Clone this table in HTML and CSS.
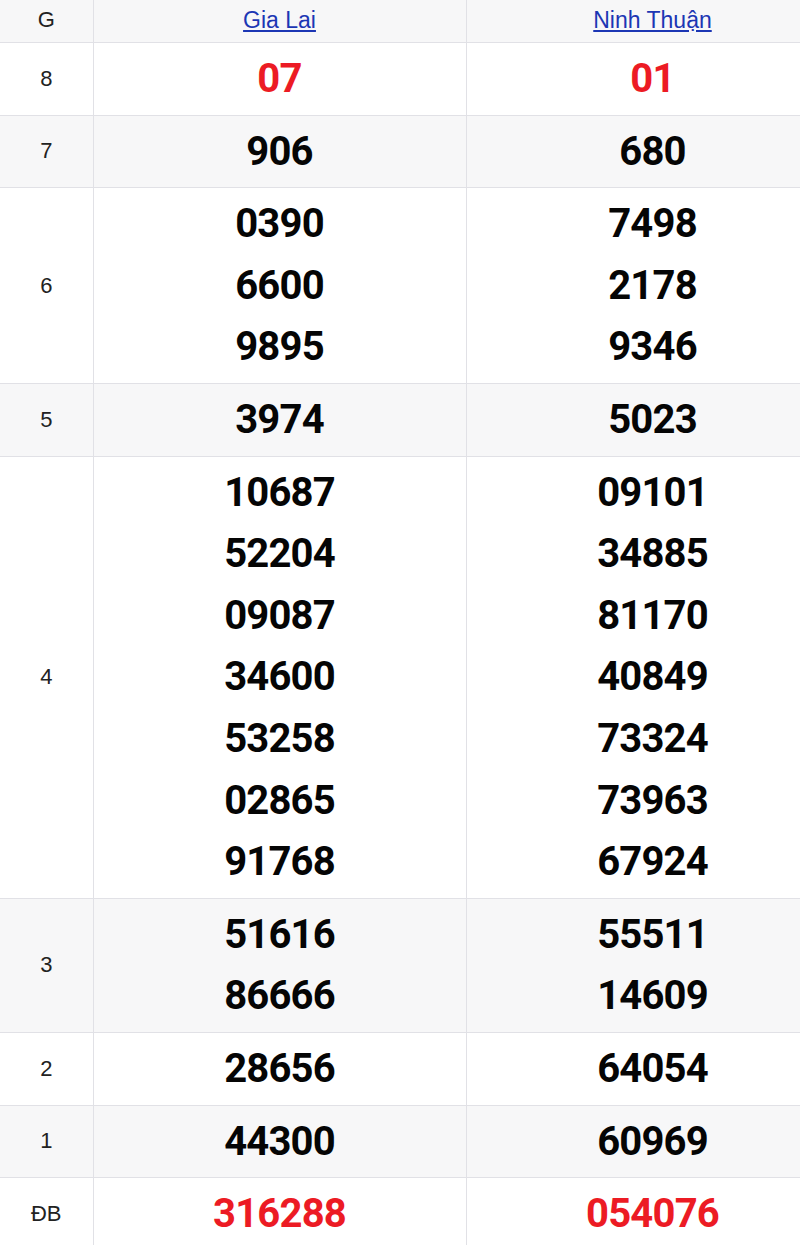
FILE: index.html
```html
<!DOCTYPE html>
<html lang="vi">
<head>
<meta charset="utf-8">
<title>Kết quả xổ số</title>
<link rel="stylesheet" href="styles.css">
</head>
<body>
<div class="wrap">
<table class="kq">
  <colgroup><col class="c-g"><col class="c-p"><col class="c-p"></colgroup>
  <thead>
    <tr class="alt">
      <th class="lbl">G</th>
      <th><a href="#">Gia Lai</a></th>
      <th><a href="#">Ninh Thuận</a></th>
    </tr>
  </thead>
  <tbody>
    <tr>
      <td class="lbl">8</td>
      <td class="num red"><div>07</div></td>
      <td class="num red"><div>01</div></td>
    </tr>
    <tr class="alt">
      <td class="lbl">7</td>
      <td class="num"><div>906</div></td>
      <td class="num"><div>680</div></td>
    </tr>
    <tr>
      <td class="lbl">6</td>
      <td class="num"><div>0390</div><div>6600</div><div>9895</div></td>
      <td class="num"><div>7498</div><div>2178</div><div>9346</div></td>
    </tr>
    <tr class="alt">
      <td class="lbl">5</td>
      <td class="num"><div>3974</div></td>
      <td class="num"><div>5023</div></td>
    </tr>
    <tr>
      <td class="lbl">4</td>
      <td class="num"><div>10687</div><div>52204</div><div>09087</div><div>34600</div><div>53258</div><div>02865</div><div>91768</div></td>
      <td class="num"><div>09101</div><div>34885</div><div>81170</div><div>40849</div><div>73324</div><div>73963</div><div>67924</div></td>
    </tr>
    <tr class="alt">
      <td class="lbl">3</td>
      <td class="num"><div>51616</div><div>86666</div></td>
      <td class="num"><div>55511</div><div>14609</div></td>
    </tr>
    <tr>
      <td class="lbl">2</td>
      <td class="num"><div>28656</div></td>
      <td class="num"><div>64054</div></td>
    </tr>
    <tr class="alt">
      <td class="lbl">1</td>
      <td class="num"><div>44300</div></td>
      <td class="num"><div>60969</div></td>
    </tr>
    <tr>
      <td class="lbl">ĐB</td>
      <td class="num red"><div>316288</div></td>
      <td class="num red"><div>054076</div></td>
    </tr>
  </tbody>
</table>
</div>
</body>
</html>
```

FILE: styles.css
```css
html, body {
  margin: 0;
  padding: 0;
  background: #ffffff;
}

.wrap {
  width: 800px;
  overflow: hidden;
}

.kq {
  width: 839px;
  border-collapse: collapse;
  table-layout: fixed;
  font-family: "Liberation Sans", Arial, sans-serif;
  color: #222;
}

.c-g { width: 93px; }
.c-p { width: 373px; }

.kq th,
.kq td {
  border-right: 1px solid #e1e1e6;
  border-bottom: 1px solid #e1e1e6;
  text-align: center;
  vertical-align: middle;
  padding: 0;
}

.kq th {
  font-weight: normal;
  font-size: 23px;
  line-height: 32px;
  padding: 4px 0 6px;
}

.kq th a {
  color: #1c36b4;
  text-decoration: underline;
  text-underline-offset: 2px;
}

.kq th.lbl {
  font-size: 22px;
}

.lbl {
  font-size: 22px;
  color: #222;
}

.alt {
  background: #f7f7f8;
}

.num {
  padding: 5px 0 !important;
  font-family: Roboto, "Liberation Sans", Arial, sans-serif;
  font-weight: 700;
  font-size: 40px;
  letter-spacing: -0.8px;
  line-height: 61.6px;
  color: #050505;
}

.num.red {
  color: #ec1b24;
}
```
